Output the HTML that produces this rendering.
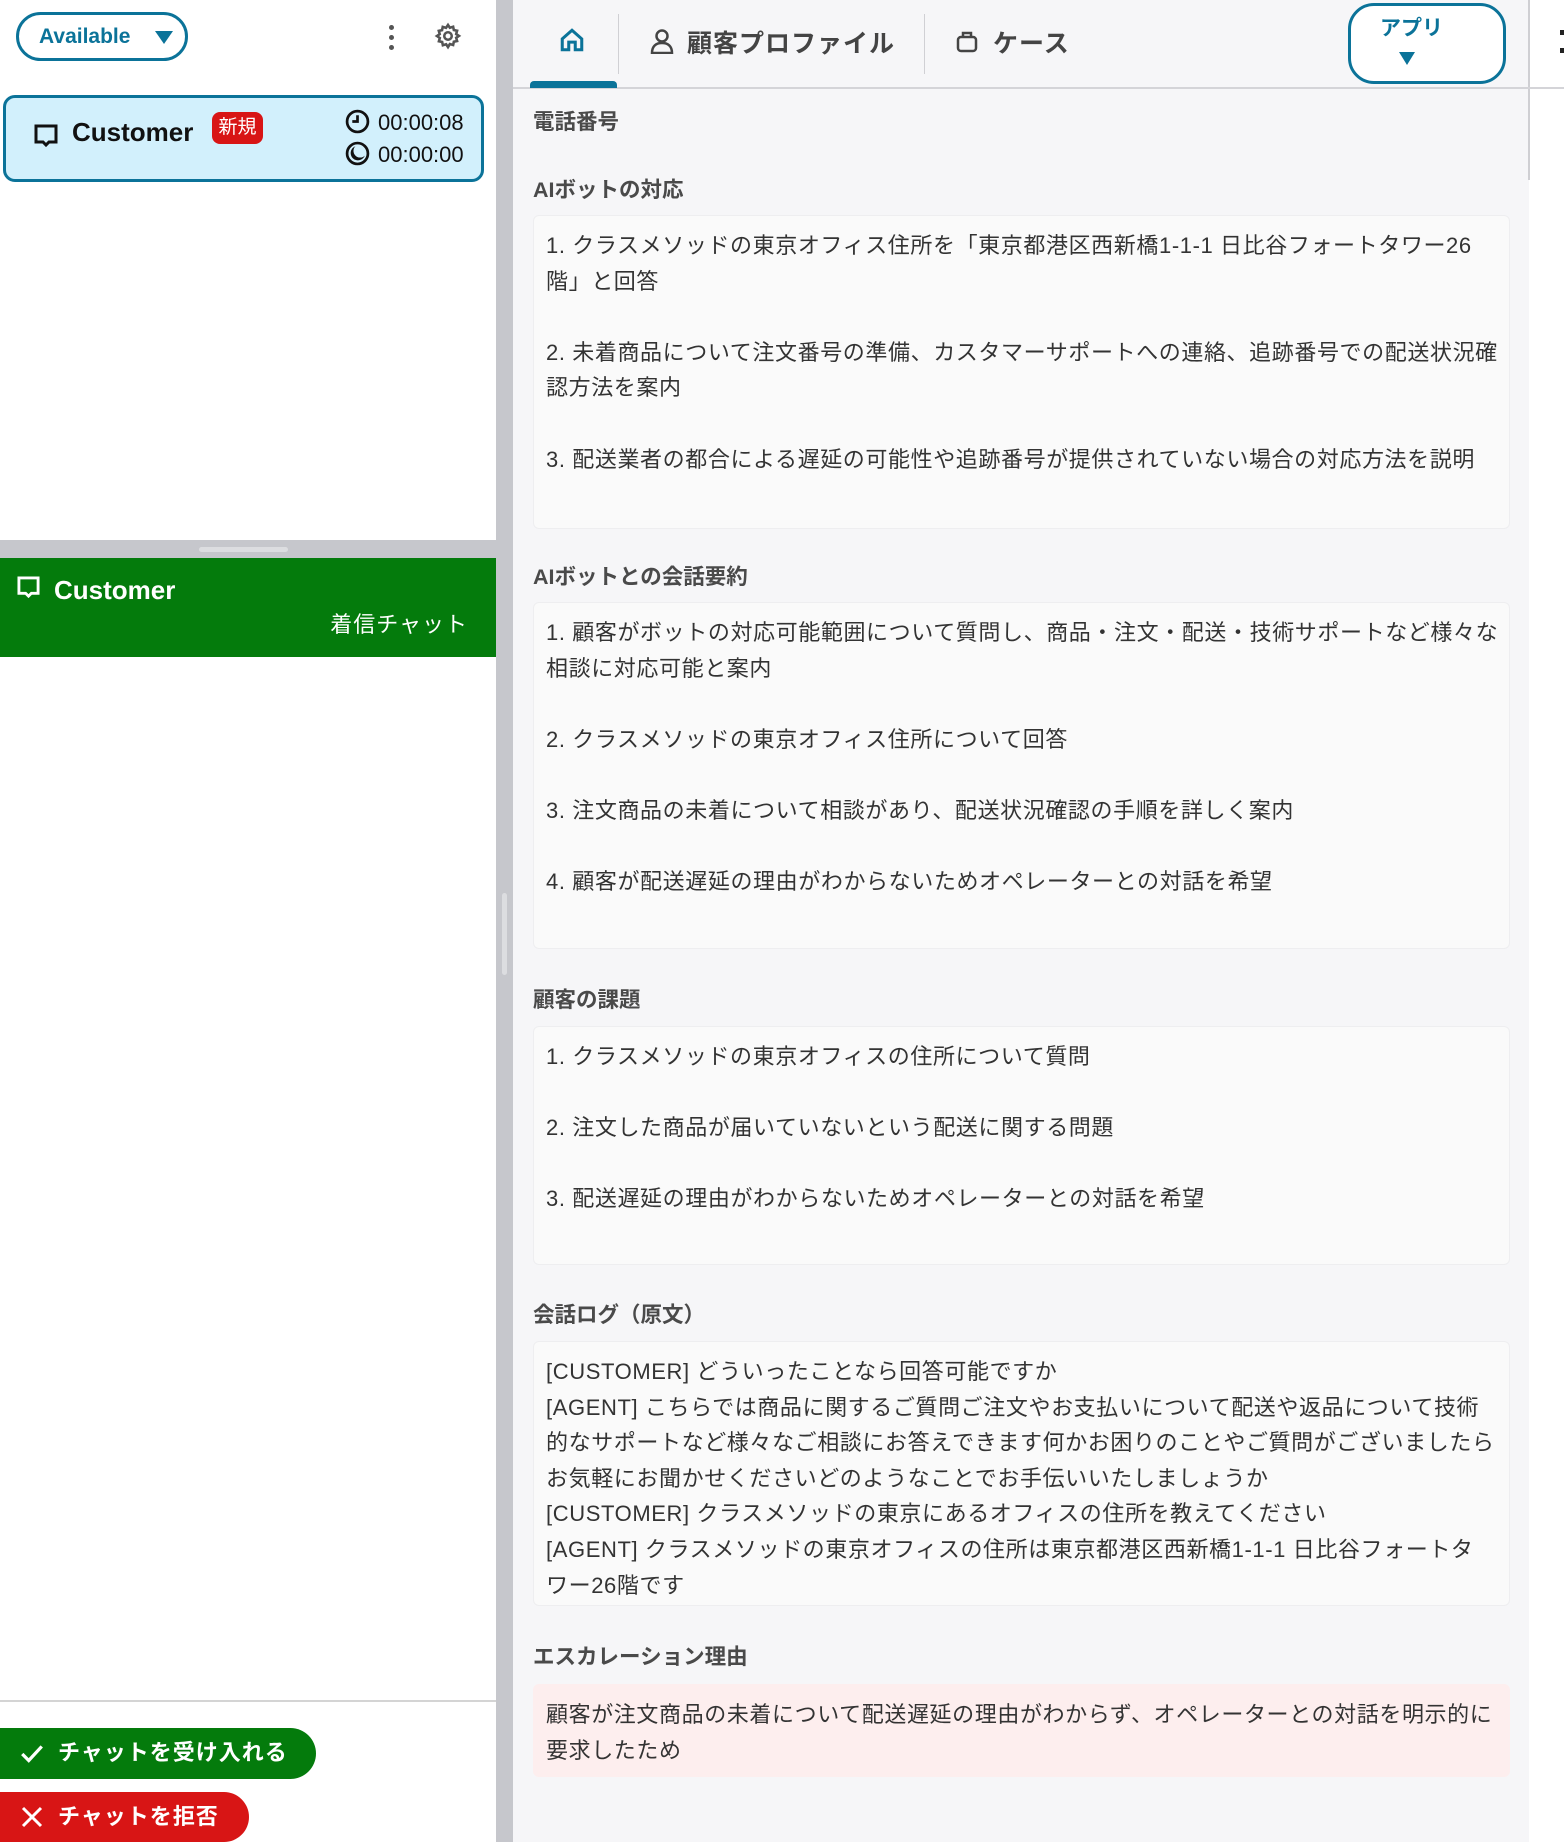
<!DOCTYPE html>
<html><head><meta charset="utf-8">
<style>
*{box-sizing:border-box;margin:0;padding:0}
body{width:1564px;height:1842px;position:relative;overflow:hidden;background:#fff;font-family:"Liberation Sans","Noto Sans CJK JP",sans-serif;color:#333}
.abs{position:absolute}
.h{position:absolute;left:533px;font-size:21.5px;font-weight:bold;color:#4a4a4a;line-height:28px}
.box{position:absolute;left:533px;width:977px;background:#fafafa;border:1px solid #eeeef0;border-radius:6px;padding:12px 12px;font-size:22px;line-height:35.6px;color:#333;white-space:nowrap;letter-spacing:0.6px}
.box p{margin:0 0 35.6px}
</style></head><body>
<!-- left panel -->
<div class="abs" style="left:16px;top:12px;width:172px;height:49px;border:3px solid #0b7399;border-radius:25px;color:#0b7399;font-weight:bold;font-size:21px;line-height:43px;padding-left:20px">Available<span style="position:absolute;left:136px;top:16px;width:0;height:0;border-left:9px solid transparent;border-right:9px solid transparent;border-top:13px solid #0b7399"></span></div>
<div class="abs" style="left:389px;top:25px;width:5px;height:5px;border-radius:50%;background:#555;box-shadow:0 10px 0 #555,0 20px 0 #555"></div>
<svg class="abs" style="left:434px;top:22px" width="28" height="28" viewBox="0 0 24 24" fill="none" stroke="#555" stroke-width="2.2"><circle cx="12" cy="12" r="3.2"/><path d="M12 2.5l1.6 2.4 2.8-.8.6 2.8 2.8.6-.8 2.8 2.4 1.6-2.4 1.6.8 2.8-2.8.6-.6 2.8-2.8-.8L12 21.5l-1.6-2.4-2.8.8-.6-2.8-2.8-.6.8-2.8L2.5 12l2.4-1.6-.8-2.8 2.8-.6.6-2.8 2.8.8z"/></svg>
<div class="abs" style="left:3px;top:95px;width:481px;height:87px;background:#d2f0fc;border:3px solid #0b7399;border-radius:12px"></div>
<svg class="abs" style="left:34px;top:124px" width="24" height="24" viewBox="0 0 24 24" fill="none" stroke="#111" stroke-width="3"><path d="M2 2h20v16H15l-3 3-3-3H2z"/></svg>
<div class="abs" style="left:72px;top:117px;font-size:26px;font-weight:bold;color:#111">Customer</div>
<div class="abs" style="left:212px;top:112px;width:51px;height:32px;background:#d81515;border-radius:8px;color:#fff;font-size:19px;line-height:32px;text-align:center">新規</div>
<svg class="abs" style="left:345px;top:109px" width="25" height="25" viewBox="0 0 24 24" fill="none" stroke="#111" stroke-width="2.6"><circle cx="12" cy="12" r="10"/><path d="M12 6v6H7"/></svg>
<svg class="abs" style="left:345px;top:141px" width="25" height="25" viewBox="0 0 24 24"><circle cx="12" cy="12" r="10" fill="none" stroke="#111" stroke-width="2.6"/><path d="M10 5a7 7 0 1 0 9 9a6 6 0 0 1-9-9z" fill="#111"/></svg>
<div class="abs" style="left:378px;top:107px;font-size:22px;line-height:32px;color:#111">00:00:08<br>00:00:00</div>

<div class="abs" style="left:0;top:540px;width:496px;height:18px;background:#c6c7cc"></div>
<div class="abs" style="left:199px;top:547px;width:89px;height:5px;border-radius:3px;background:#dcdde0"></div>
<div class="abs" style="left:0;top:558px;width:496px;height:99px;background:#047b0c"></div>
<svg class="abs" style="left:17px;top:576px" width="23" height="23" viewBox="0 0 24 24" fill="none" stroke="#fff" stroke-width="3"><path d="M2 2h20v16H15l-3 3-3-3H2z"/></svg>
<div class="abs" style="left:54px;top:575px;font-size:26px;font-weight:bold;color:#fff">Customer</div>
<div class="abs" style="left:290px;top:607px;width:178px;text-align:right;font-size:22px;color:#fff;letter-spacing:1px">着信チャット</div>

<div class="abs" style="left:0;top:1700px;width:496px;height:2px;background:#d4d4d4"></div>
<div class="abs" style="left:0;top:1728px;width:316px;height:51px;background:#047b0c;border-radius:0 26px 26px 0"></div>
<svg class="abs" style="left:19px;top:1741px" width="26" height="26" viewBox="0 0 24 24" fill="none" stroke="#fff" stroke-width="3"><path d="M3 12l6 6L21 5"/></svg>
<div class="abs" style="left:58px;top:1738px;font-size:22px;font-weight:bold;color:#fff;letter-spacing:1px;line-height:30px">チャットを受け入れる</div>
<div class="abs" style="left:0;top:1792px;width:249px;height:50px;background:#d81515;border-radius:0 26px 26px 0"></div>
<svg class="abs" style="left:20px;top:1805px" width="24" height="24" viewBox="0 0 24 24" fill="none" stroke="#fff" stroke-width="3"><path d="M3 3l18 18M21 3L3 21"/></svg>
<div class="abs" style="left:58px;top:1802px;font-size:22px;font-weight:bold;color:#fff;letter-spacing:1px;line-height:30px">チャットを拒否</div>

<!-- divider -->
<div class="abs" style="left:496px;top:0;width:17px;height:1842px;background:#c6c7cc"></div>
<div class="abs" style="left:502px;top:893px;width:5px;height:82px;border-radius:3px;background:#dcdde0"></div>

<!-- right panel -->
<div class="abs" style="left:513px;top:0;width:1016px;height:1842px;background:#f6f6f8"></div>
<div class="abs" style="left:1528px;top:0;width:2px;height:180px;background:#cfcfd3"></div>
<div class="abs" style="left:513px;top:87px;width:1051px;height:2px;background:#d4d4d8"></div>
<div class="abs" style="left:530px;top:81px;width:87px;height:7px;background:#0b7399;border-radius:4px 4px 0 0"></div>
<svg class="abs" style="left:559px;top:27px" width="26" height="26" viewBox="0 0 24 24" fill="none" stroke="#0b7399" stroke-width="2.8"><path d="M3 11L12 3l9 8v10h-6v-7H9v7H3z"/></svg>
<div class="abs" style="left:618px;top:14px;width:1px;height:60px;background:#d0d0d4"></div>
<svg class="abs" style="left:650px;top:28px" width="24" height="26" viewBox="0 0 24 26" fill="none" stroke="#444" stroke-width="2.5"><circle cx="12" cy="8" r="5.5"/><path d="M2 25c0-7 4-10 10-10s10 3 10 10z"/></svg>
<div class="abs" style="left:687px;top:24px;font-size:25px;font-weight:bold;color:#444;letter-spacing:1px">顧客プロファイル</div>
<div class="abs" style="left:924px;top:14px;width:1px;height:60px;background:#d0d0d4"></div>
<svg class="abs" style="left:956px;top:29px" width="22" height="24" viewBox="0 0 22 24" fill="none" stroke="#444" stroke-width="2.5"><rect x="2" y="8" width="18" height="14" rx="3"/><path d="M7 8V4h8v4"/></svg>
<div class="abs" style="left:993px;top:24px;font-size:25px;font-weight:bold;color:#444;letter-spacing:1px">ケース</div>
<div class="abs" style="left:1348px;top:3px;width:158px;height:81px;border:3px solid #0b7399;border-radius:26px;background:#fff"></div>
<div class="abs" style="left:1380px;top:12px;font-size:21px;font-weight:bold;color:#0b7399">アプリ</div>
<div class="abs" style="left:1399px;top:52px;width:0;height:0;border-left:8px solid transparent;border-right:8px solid transparent;border-top:13px solid #0b7399"></div>
<div class="abs" style="left:1560px;top:30px;width:5px;height:5px;background:#222;box-shadow:0 18px 0 #222"></div>

<div class="h" style="top:108px">電話番号</div>
<div class="h" style="top:176px">AIボットの対応</div>
<div class="box" style="top:215px;height:314px">
<p>1. クラスメソッドの東京オフィス住所を「東京都港区西新橋1-1-1 日比谷フォートタワー26<br>階」と回答</p>
<p>2. 未着商品について注文番号の準備、カスタマーサポートへの連絡、追跡番号での配送状況確<br>認方法を案内</p>
<p>3. 配送業者の都合による遅延の可能性や追跡番号が提供されていない場合の対応方法を説明</p>
</div>
<div class="h" style="top:563px">AIボットとの会話要約</div>
<div class="box" style="top:602px;height:347px">
<p>1. 顧客がボットの対応可能範囲について質問し、商品・注文・配送・技術サポートなど様々な<br>相談に対応可能と案内</p>
<p>2. クラスメソッドの東京オフィス住所について回答</p>
<p>3. 注文商品の未着について相談があり、配送状況確認の手順を詳しく案内</p>
<p>4. 顧客が配送遅延の理由がわからないためオペレーターとの対話を希望</p>
</div>
<div class="h" style="top:986px">顧客の課題</div>
<div class="box" style="top:1026px;height:239px">
<p>1. クラスメソッドの東京オフィスの住所について質問</p>
<p>2. 注文した商品が届いていないという配送に関する問題</p>
<p>3. 配送遅延の理由がわからないためオペレーターとの対話を希望</p>
</div>
<div class="h" style="top:1301px">会話ログ（原文）</div>
<div class="box" style="top:1341px;height:265px;padding-top:12px">
[CUSTOMER] どういったことなら回答可能ですか<br>[AGENT] こちらでは商品に関するご質問ご注文やお支払いについて配送や返品について技術<br>的なサポートなど様々なご相談にお答えできます何かお困りのことやご質問がございましたら<br>お気軽にお聞かせくださいどのようなことでお手伝いいたしましょうか<br>[CUSTOMER] クラスメソッドの東京にあるオフィスの住所を教えてください<br>[AGENT] クラスメソッドの東京オフィスの住所は東京都港区西新橋1-1-1 日比谷フォートタ<br>ワー26階です
</div>
<div class="h" style="top:1643px">エスカレーション理由</div>
<div class="box" style="top:1684px;height:93px;background:#fdeeee;border-color:#fdeeee">
顧客が注文商品の未着について配送遅延の理由がわからず、オペレーターとの対話を明示的に<br>要求したため
</div>
</body></html>
